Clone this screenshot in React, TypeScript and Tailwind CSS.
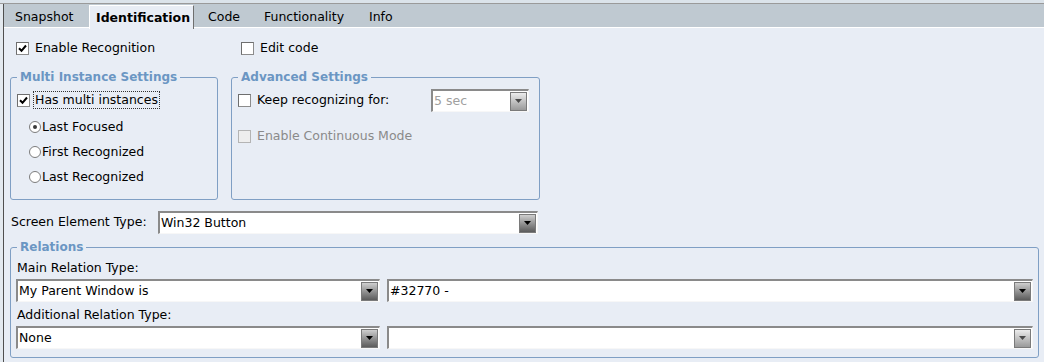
import React from "react";

function CheckBox({ checked = false, disabled = false }: { checked?: boolean; disabled?: boolean }) {
  return (
    <span
      className={
        "flex h-[13px] w-[13px] shrink-0 items-center justify-center border " +
        (disabled
          ? "border-[#b4b4b4] bg-[#eeeeee]"
          : "border-[#8c8c8c] border-t-[#6e6e6e] border-l-[#6e6e6e] bg-white")
      }
    >
      {checked ? (
        <svg width="9" height="9" viewBox="0 0 9 9">
          <path d="M1 4.2 L3.5 6.8 L8 1.5" stroke="#000" strokeWidth="2" fill="none" />
        </svg>
      ) : null}
    </span>
  );
}

function Radio({ selected = false }: { selected?: boolean }) {
  return (
    <span className="flex h-[12px] w-[12px] shrink-0 items-center justify-center rounded-full border border-[#7c7c7c] bg-white">
      {selected ? <span className="h-[4px] w-[4px] rounded-full bg-[#3a3a3a]" /> : null}
    </span>
  );
}

function Dropdown({
  value,
  width,
  disabled = false,
  faded = false,
}: {
  value: string;
  width: string;
  disabled?: boolean;
  faded?: boolean;
}) {
  return (
    <div
      className={
        "flex h-[23px] items-center border-t-2 border-l-2 border-b border-r border-t-[#8a8a8a] border-l-[#8a8a8a] border-b-[#f7f7f7] border-r-[#f7f7f7] bg-white " +
        width
      }
    >
      <span className={"flex-1 truncate pl-[1px] " + (disabled ? "text-[#a0a0a0]" : "text-black")}>{value}</span>
      <span
        className={
          "mr-[1px] flex h-[19px] w-[17px] items-center justify-center border border-[#7a7a7a] " +
          (faded || disabled
            ? "bg-gradient-to-b from-[#ececec] to-[#9a9a9a]"
            : "bg-gradient-to-b from-[#cfcfcf] to-[#5c5c5c]")
        }
      >
        <svg width="7" height="4" viewBox="0 0 7 4">
          <path d="M0 0 H7 L3.5 4 Z" fill={faded || disabled ? "#4a4a4a" : "#000"} />
        </svg>
      </span>
    </div>
  );
}

function Group({ title, className, children }: { title: string; className: string; children?: React.ReactNode }) {
  return (
    <fieldset className={"rounded-[3px] border border-[#7f9fc4] " + className}>
      <legend className="ml-[6px] px-[3px] text-[12px] leading-[14px] font-bold text-[#6b96c3]">{title}</legend>
      {children}
    </fieldset>
  );
}

const tabs = [
  { name: "Snapshot", w: "w-[85px] pl-[11px]" },
  { name: "Identification", w: "w-[105px] pl-[6px]", active: true },
  { name: "Code", w: "w-[57px] pl-[14px]" },
  { name: "Functionality", w: "w-[105px] pl-[13px]" },
  { name: "Info", w: "w-[50px] pl-[13px]" },
];

export default function App() {
  return (
    <div className="h-[362px] w-[1044px] overflow-hidden bg-[#dbe3ea] pt-[3px] font-['DejaVu_Sans',sans-serif] text-[12.5px] text-black">
      <div className="flex h-full border-t border-t-[#9a9a9a]">
        <div className="w-[3px] bg-[#e3e9ef]" />
        <div className="flex-1 border-l border-l-[#4f4f4f] bg-[#e8edf5]">
          {/* tab strip */}
          <div className="flex h-[24px] border-b border-b-white bg-[#bfc9d1] pt-[1px]">
            {tabs.map((t) =>
              t.active ? (
                <div
                  key={t.name}
                  className={
                    "-mb-[1px] flex h-[24px] items-center border-t border-l border-r border-t-white border-l-white border-r-[#6f6f6f] bg-[#e8edf5] pt-[1px] font-bold " +
                    t.w
                  }
                >
                  {t.name}
                </div>
              ) : (
                <div key={t.name} className={"flex h-[22px] items-center pt-[2px] " + t.w}>
                  {t.name}
                </div>
              )
            )}
          </div>

          {/* enable row */}
          <div className="mt-[10px] flex h-[20px] items-center pl-[12px]">
            <CheckBox checked />
            <span className="ml-[6px] w-[206px]">Enable Recognition</span>
            <CheckBox />
            <span className="ml-[6px]">Edit code</span>
          </div>

          {/* settings groups */}
          <div className="mt-[12px] flex pl-[6px]">
            <Group title="Multi Instance Settings" className="h-[130px] w-[208px]">
              <div className="mt-[6px] flex h-[20px] items-center pl-[6px]">
                <CheckBox checked />
                <span className="ml-[3px] border border-dotted border-[#333] px-[1px] leading-[16px]">Has multi instances</span>
              </div>
              <div className="mt-[7px] flex flex-col gap-[5px] pl-[18px]">
                <div className="flex h-[20px] items-center">
                  <Radio selected />
                  <span className="ml-[1px]">Last Focused</span>
                </div>
                <div className="flex h-[20px] items-center">
                  <Radio />
                  <span className="ml-[1px]">First Recognized</span>
                </div>
                <div className="flex h-[20px] items-center">
                  <Radio />
                  <span className="ml-[1px]">Last Recognized</span>
                </div>
              </div>
            </Group>
            <Group title="Advanced Settings" className="ml-[13px] h-[130px] w-[309px]">
              <div className="mt-[5px] flex h-[23px] items-center pl-[6px] pr-[10px]">
                <CheckBox />
                <span className="ml-[6px]">Keep recognizing for:</span>
                <div className="ml-auto">
                  <Dropdown value="5 sec" width="w-[98px]" disabled />
                </div>
              </div>
              <div className="mt-[14px] flex h-[20px] items-center pl-[6px] text-[#8a8a8a]">
                <CheckBox disabled />
                <span className="ml-[6px]">Enable Continuous Mode</span>
              </div>
            </Group>
          </div>

          {/* screen element type */}
          <div className="mt-[11px] flex items-center pl-[7px]">
            <span className="w-[147px]">Screen Element Type:</span>
            <Dropdown value="Win32 Button" width="w-[380px]" />
          </div>

          {/* relations */}
          <Group title="Relations" className="ml-[6px] mt-[6px] h-[118px] w-[1029px]">
            <div className="mt-[6px] flex h-[16px] items-center pl-[6px]">Main Relation Type:</div>
            <div className="mt-[3px] flex gap-[7px] pl-[5px]">
              <Dropdown value="My Parent Window is" width="w-[364px]" />
              <Dropdown value="#32770 -" width="w-[646px]" />
            </div>
            <div className="mt-[5px] flex h-[16px] items-center pl-[6px]">Additional Relation Type:</div>
            <div className="mt-[3px] flex gap-[7px] pl-[5px]">
              <Dropdown value="None" width="w-[364px]" />
              <Dropdown value="" width="w-[646px]" faded />
            </div>
          </Group>
        </div>
      </div>
    </div>
  );
}
